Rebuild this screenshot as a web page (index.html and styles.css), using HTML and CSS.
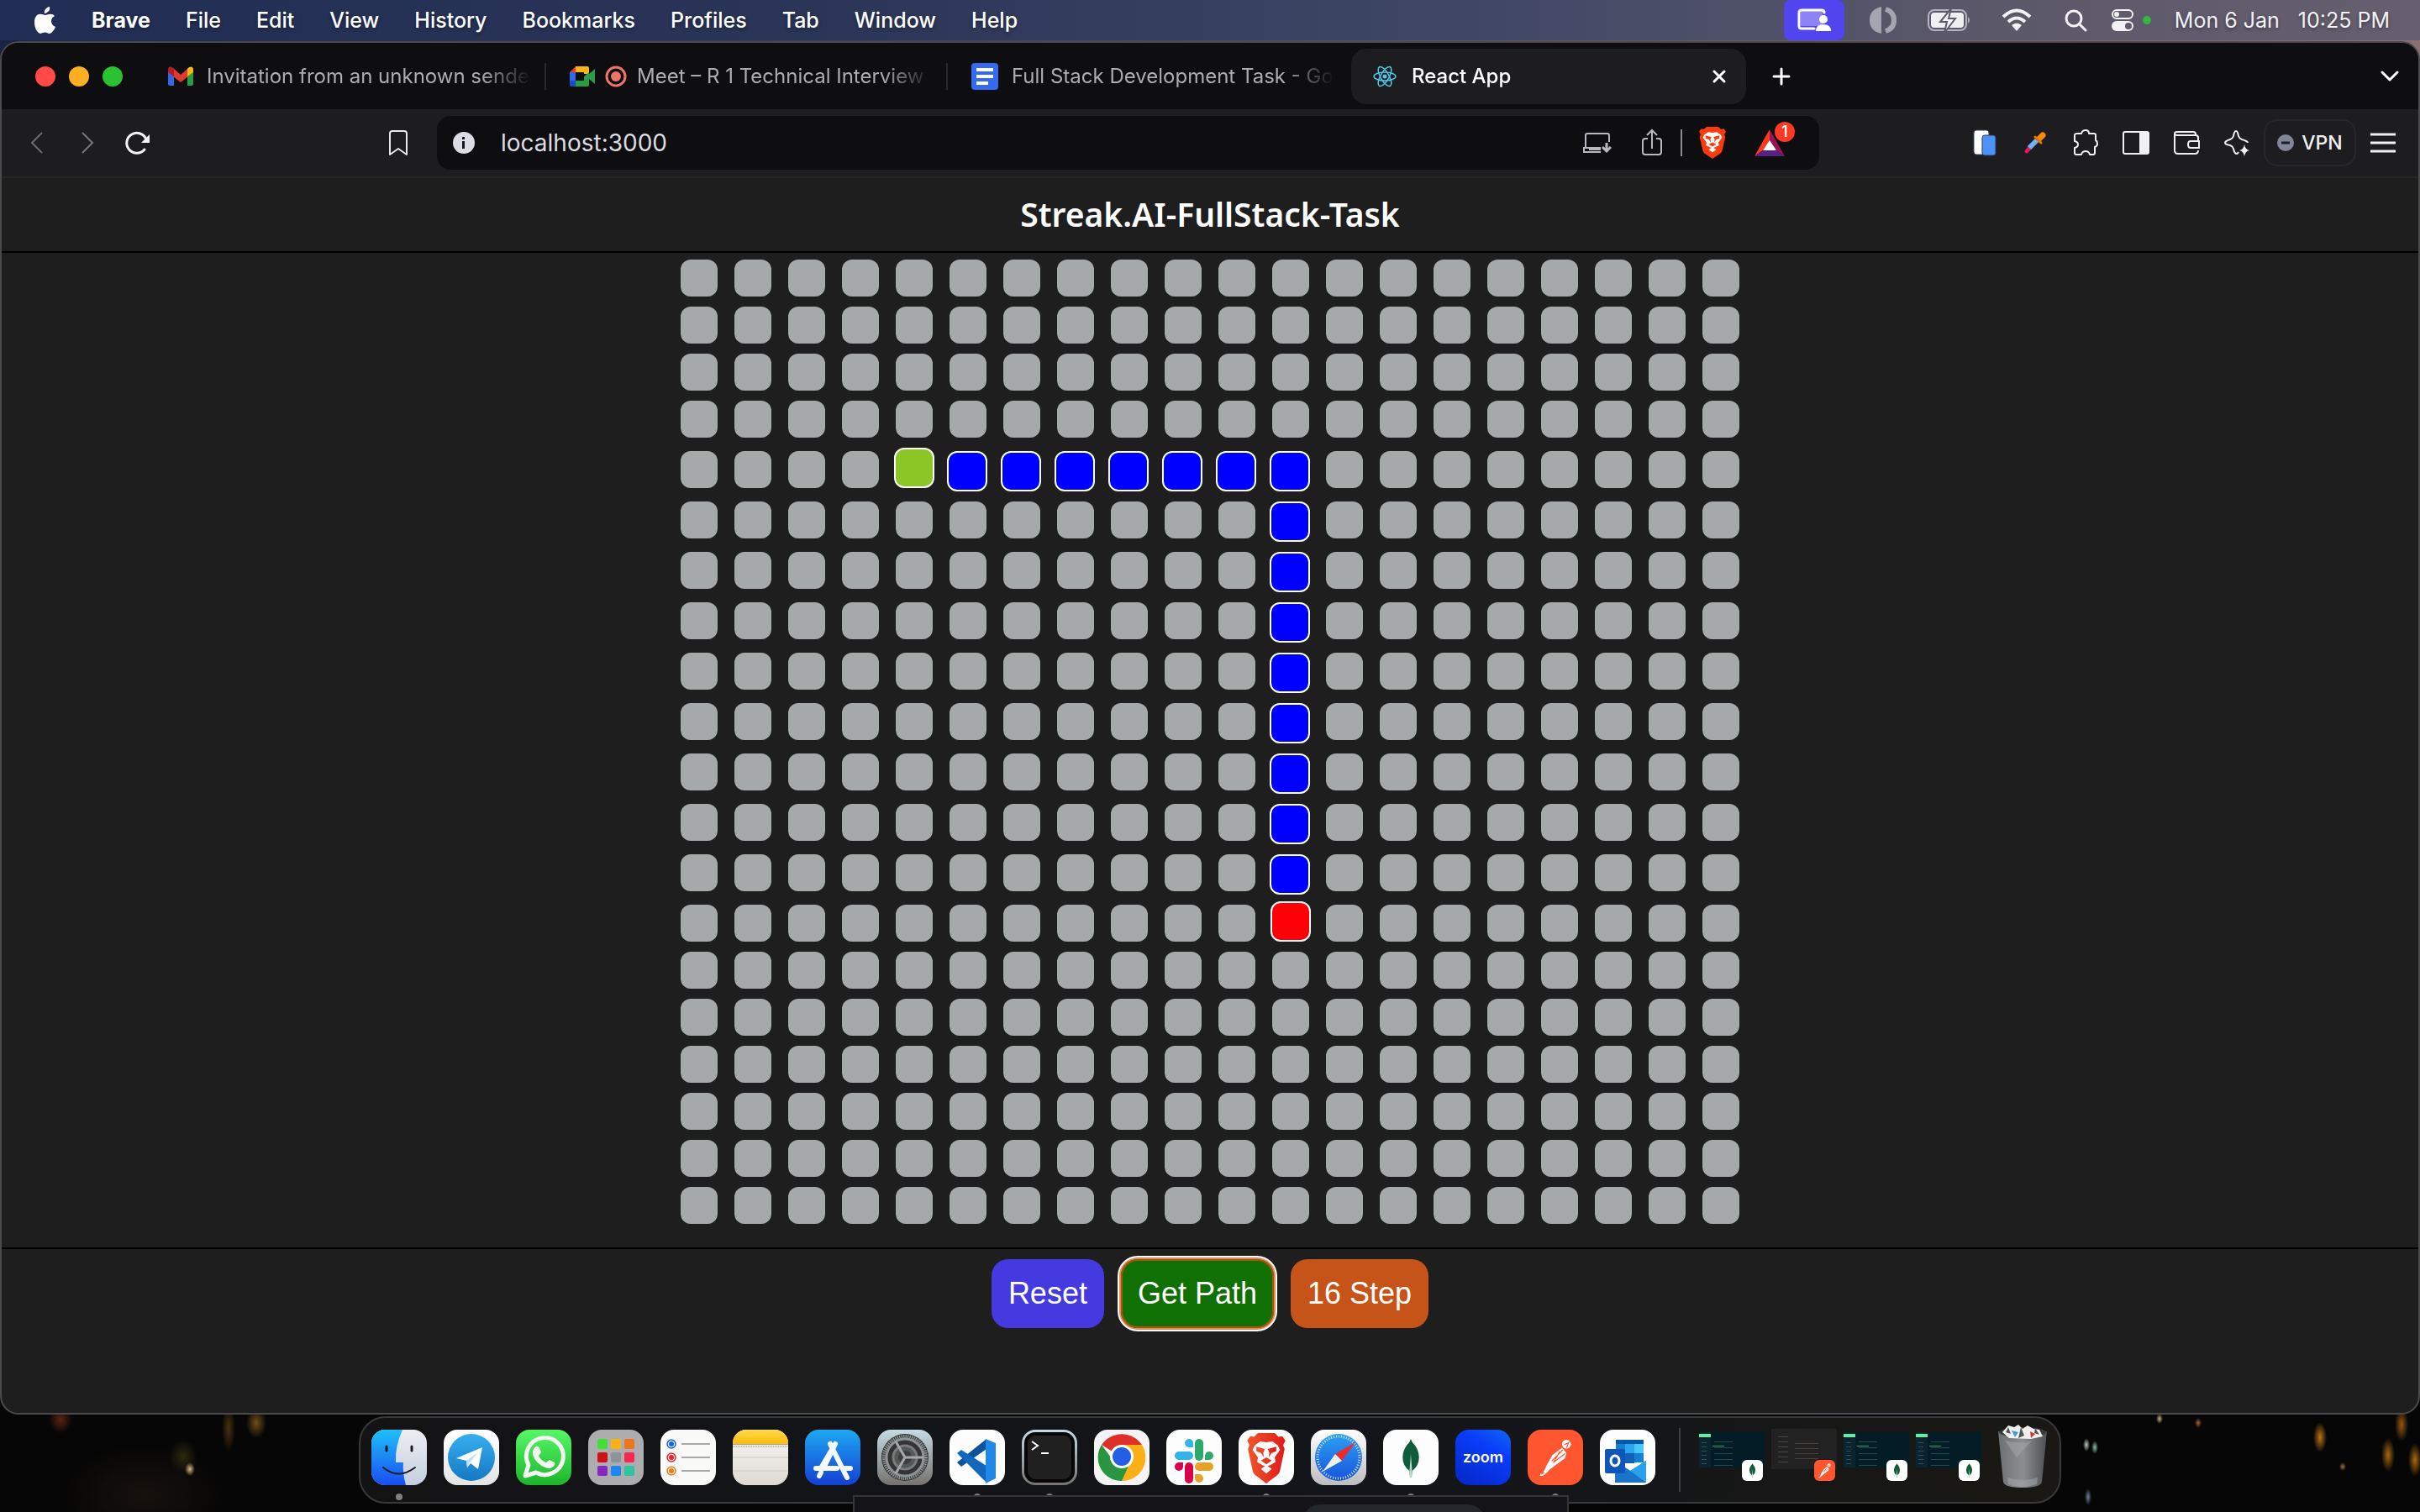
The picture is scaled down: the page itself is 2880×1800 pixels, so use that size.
FILE: index.html
```html
<!DOCTYPE html>
<html lang="en">
<head>
<meta charset="utf-8">
<meta name="viewport" content="width=device-width, initial-scale=1">
<title>React App</title>
<link rel="stylesheet" href="styles.css">
</head>
<body>
<svg class="defs" aria-hidden="true">
  <defs>
    <linearGradient id="gBlue" x1="0" y1="0" x2="0" y2="1"><stop offset="0" stop-color="#1ec0fb"/><stop offset="1" stop-color="#1a4df0"/></linearGradient>
    <linearGradient id="gFace" x1="0" y1="0" x2="0" y2="1"><stop offset="0" stop-color="#eeeef2"/><stop offset="1" stop-color="#c3cfe0"/></linearGradient>
    <linearGradient id="gWhite" x1="0" y1="0" x2="0" y2="1"><stop offset="0" stop-color="#fff"/><stop offset="1" stop-color="#e4e4e4"/></linearGradient>
    <linearGradient id="gTele" x1="0" y1="0" x2="0" y2="1"><stop offset="0" stop-color="#37aef0"/><stop offset="1" stop-color="#1479c4"/></linearGradient>
    <linearGradient id="gWa" x1="0" y1="0" x2="0" y2="1"><stop offset="0" stop-color="#56f866"/><stop offset="1" stop-color="#1cb52a"/></linearGradient>
    <linearGradient id="gStore" x1="0" y1="0" x2="0" y2="1"><stop offset="0" stop-color="#1ea8f3"/><stop offset="1" stop-color="#1440d2"/></linearGradient>
    <linearGradient id="gSet" x1="0" y1="0" x2="0" y2="1"><stop offset="0" stop-color="#c5dbe4"/><stop offset="1" stop-color="#75726e"/></linearGradient>
    <linearGradient id="gNote" x1="0" y1="0" x2="0" y2="1"><stop offset="0" stop-color="#f8f7f5"/><stop offset="1" stop-color="#dedad3"/></linearGradient>
    <linearGradient id="gYel" x1="0" y1="0" x2="0" y2="1"><stop offset="0" stop-color="#ffdb4d"/><stop offset="1" stop-color="#fdba0a"/></linearGradient>
    <linearGradient id="gLion" x1="0" y1="0" x2="1" y2="0"><stop offset="0" stop-color="#f0552a"/><stop offset="1" stop-color="#dd1b1b"/></linearGradient>
    <linearGradient id="gSaf" x1="0" y1="0" x2="0" y2="1"><stop offset="0" stop-color="#2da0f0"/><stop offset="1" stop-color="#1754dd"/></linearGradient>
    <linearGradient id="gSafBg" x1="0" y1="0" x2="0" y2="1"><stop offset="0" stop-color="#fff"/><stop offset="1" stop-color="#bdbdbd"/></linearGradient>
    <linearGradient id="gTrash" x1="0" y1="0" x2="1" y2="0"><stop offset="0" stop-color="#6c7073"/><stop offset=".5" stop-color="#8b8f92"/><stop offset="1" stop-color="#4c5053"/></linearGradient>
    <symbol id="lion" viewBox="0 0 50 66">
      <path d="M14 0h22l5 5 5-1 4 6-3 6 2 5-6 28q-1 5-6 8L25 66 13 57q-5-3-6-8L1 21l2-5-3-6 4-6 5 1z"/>
      <path fill="#fff" d="M17 11l8 1 8-1 7 5 3 6-7 10 1 6-7 4-5 2-5-2-7-4 1-6-7-10 3-6z"/>
      <path d="M12 18l11 3-2 5 1 6-4-6-6-2zM38 18l-11 3 2 5-1 6 4-6 6-2zM18 36l7-4 7 4-7 5z"/>
      <path fill="#fff" d="M18 47l7-5 7 5-7 6z"/>
    </symbol>
    <symbol id="leaf" viewBox="0 0 22 52">
      <path fill="#115b3d" d="M11 0q1 4 5 8 6 8 6 17 0 11-9 18l-1 9h-2l-1-9Q0 36 0 25 0 16 6 8q4-4 5-8z"/>
      <path fill="#b9d8c6" d="M11 20l2 26-1 6h-2l-1-6z"/>
    </symbol>
    <symbol id="courier" viewBox="0 0 44 50">
      <circle cx="37" cy="7" r="6" fill="#fff"/>
      <path fill="#fff" d="M31 12l6 7-2 7-20 15-5 5-5 4H1l1-3 3 0 5-11 8-14z"/>
      <path stroke="#ff5630" stroke-width="1.4" fill="none" d="M32 15L17 30M35 20L19 32M28 17l-8 14M3 47l4-1M34 8l6-3-3 7"/>
    </symbol>
  </defs>
</svg>

<header class="menubar">
  <nav class="menubar__left" aria-label="Application menu">
    <svg class="apple" viewBox="0 0 26 32" aria-hidden="true"><path fill="#fff" d="M18 0q1 4-2 6-2 2-4 2-1-3 2-6 2-2 4-2zM24 11q-4 2-4 6 0 5 5 7-1 3-3 5-2 3-4 3-2 0-3-1-2-1-5 0l-3 1q-2 0-4-3Q0 25 0 18q0-5 3-8 3-2 6-1l4 1 4-1q5-1 7 2z"/></svg>
    <a class="menubar__item menubar__item--app" href="#">Brave</a>
    <a class="menubar__item" href="#">File</a>
    <a class="menubar__item" href="#">Edit</a>
    <a class="menubar__item" href="#">View</a>
    <a class="menubar__item" href="#">History</a>
    <a class="menubar__item" href="#">Bookmarks</a>
    <a class="menubar__item" href="#">Profiles</a>
    <a class="menubar__item" href="#">Tab</a>
    <a class="menubar__item" href="#">Window</a>
    <a class="menubar__item" href="#">Help</a>
  </nav>
  <div class="menubar__right">
    <span class="share-pill"><svg width="40" height="30" viewBox="0 0 40 30"><path fill="#8c84f4" d="M4 4h26v18H4z"/><path fill="none" stroke="#fff" stroke-width="3" stroke-linecap="round" d="M20 25H5q-3 0-3-3V6q0-3 3-3h24q3 0 3 3"/><circle cx="31" cy="14" r="5" fill="#fff"/><path fill="#fff" d="M22 28q0-8 9-8t9 8z"/></svg></span>
    <svg class="status status--halves" width="34" height="34" viewBox="0 0 34 34"><path fill="#a5a5b2" d="M15 1v32Q1 30 1 17T15 1z"/><path fill="none" stroke="#a5a5b2" stroke-width="6" d="M20 4q10 3 10 13T20 30"/></svg>
    <svg class="status status--battery" width="52" height="30" viewBox="0 0 52 30"><rect x="1" y="3" width="45" height="24" rx="7" fill="none" stroke="#b5b3bf" stroke-width="2"/><rect x="4" y="6" width="39" height="18" rx="4" fill="#f0f0f2"/><path fill="#b5b3bf" d="M48 11q4 4 0 8z"/><path fill="#f4f4f6" stroke="#5d5a6c" stroke-width="2" d="M28 1L15 17h8l-3 13 13-17h-8z"/></svg>
    <svg class="status status--wifi" width="36" height="28" viewBox="0 0 36 28"><g fill="none" stroke="#f2f2f4" stroke-width="4"><path d="M2 10q16-15 32 0"/><path d="M8 16q10-9 20 0"/></g><path fill="#f2f2f4" d="M12 20q6-5 12 0l-6 7z"/></svg>
    <svg class="status status--search" width="28" height="28" viewBox="0 0 28 28" fill="none" stroke="#f2f2f4" stroke-width="3" stroke-linecap="round"><circle cx="12" cy="12" r="9"/><path d="M19 19l7 7"/></svg>
    <span class="control"><svg width="28" height="28" viewBox="0 0 28 28"><rect x="2" y="2" width="24" height="10" rx="5" fill="none" stroke="#f2f2f4" stroke-width="2"/><circle cx="7" cy="7" r="3" fill="#f2f2f4"/><rect x="1" y="15" width="26" height="12" rx="6" fill="#f2f2f4"/><circle cx="21" cy="21" r="4" fill="#5f5b6e"/></svg><i class="control__dot"></i></span>
    <time class="clock"><span>Mon 6 Jan</span><span>10:25 PM</span></time>
  </div>
</header>

<div class="window">
  <div class="tabstrip">
    <div class="lights"><i class="light light--close"></i><i class="light light--min"></i><i class="light light--max"></i></div>
    <div class="tab">
      <svg width="30" height="24" viewBox="0 0 30 24"><path fill="#3367e8" d="M0 6l7 5v12H2q-2 0-2-2z"/><path fill="#2a9c46" d="M30 6l-7 5v12h5q2 0 2-2z"/><path fill="#e03a30" d="M6 2l9 8 9-8v10l-9 7-9-7z"/><path fill="#b81a20" d="M0 4q0-5 5-3l2 2v9L0 7z"/><path fill="#fbb814" d="M30 4q0-5-5-3l-2 2v9l7-5z"/></svg>
      <span class="tab__title">Invitation from an unknown sende</span>
    </div>
    <div class="tab tab--call">
      <svg width="30" height="24" viewBox="0 0 30 24"><path fill="#e8392c" d="M0 7l7-7v7z"/><path fill="#fbb814" d="M7 0h14q2 0 2 2v7h-6V7H7z"/><path fill="#2f6bea" d="M0 7h7v10H0z"/><path fill="#1a4dc4" d="M0 17h7v7H2q-2 0-2-2z"/><path fill="#2a9c46" d="M7 17h10v-5l6-5v15q0 2-2 2H7zM23 9l7-6v18l-7-6z"/></svg>
      <svg width="26" height="26" viewBox="0 0 26 26"><circle cx="13" cy="13" r="11" fill="none" stroke="#ee7468" stroke-width="3"/><circle cx="13" cy="13" r="6" fill="#ee7468"/></svg>
      <span class="tab__title">Meet – R 1 Technical Interview</span>
    </div>
    <div class="tab tab--last">
      <svg width="32" height="32" viewBox="0 0 32 32"><rect width="32" height="32" rx="4" fill="#346af0"/><path fill="#fff" d="M6 6h20v4H6zM6 14h20v4H6zM6 22h14v4H6z"/></svg>
      <span class="tab__title">Full Stack Development Task - Go</span>
    </div>
    <div class="tab tab--active">
      <svg width="28" height="26" viewBox="-14 -13 28 26" fill="none" stroke="#4fc8ea" stroke-width="1.5"><circle r="2.5" fill="#4fc8ea" stroke="none"/><ellipse rx="13" ry="5"/><ellipse rx="13" ry="5" transform="rotate(60)"/><ellipse rx="13" ry="5" transform="rotate(120)"/></svg>
      <span class="tab__title">React App</span>
      <button class="icon-btn icon-btn--small" aria-label="Close tab"><svg width="16" height="16" viewBox="0 0 16 16"><path stroke="#fff" stroke-width="3" stroke-linecap="round" d="M2 2l12 12M14 2L2 14"/></svg></button>
    </div>
    <button class="icon-btn icon-btn--new" aria-label="New tab"><svg width="22" height="22" viewBox="0 0 22 22"><path stroke="#fff" stroke-width="3" stroke-linecap="round" d="M11 2v18M2 11h18"/></svg></button>
    <button class="icon-btn icon-btn--search" aria-label="Search tabs"><svg width="22" height="14" viewBox="0 0 22 14"><path fill="none" stroke="#fff" stroke-width="3" stroke-linecap="round" stroke-linejoin="round" d="M2 2l9 9 9-9"/></svg></button>
  </div>

  <div class="toolbar">
    <div class="toolbar__nav">
      <button class="icon-btn" aria-label="Back"><svg width="18" height="28" viewBox="0 0 18 28"><path fill="none" stroke="#6c6c70" stroke-width="2" d="M15 2L3 14l12 12"/></svg></button>
      <button class="icon-btn" aria-label="Forward"><svg width="18" height="28" viewBox="0 0 18 28"><path fill="none" stroke="#77777b" stroke-width="2" d="M3 2l12 12L3 26"/></svg></button>
      <button class="icon-btn" aria-label="Reload"><svg width="32" height="30" viewBox="0 0 32 30"><path fill="none" stroke="#f4f4f4" stroke-width="3" stroke-linecap="round" d="M24 23A12 12 0 1 1 26 11"/><path fill="#f4f4f4" d="M30 5v10H20z"/></svg></button>
      <button class="icon-btn toolbar__bookmark" aria-label="Bookmark"><svg width="24" height="30" viewBox="0 0 24 30"><path fill="none" stroke="#e8e8ea" stroke-width="2" stroke-linejoin="round" d="M2 4q0-3 3-3h14q3 0 3 3v25l-10-7-10 7z"/></svg></button>
    </div>
    <div class="urlbar">
      <svg width="28" height="28" viewBox="0 0 28 28"><circle cx="14" cy="14" r="13" fill="#dcdce4"/><path fill="#15151a" d="M12 12h3v9h-3zM12 7h3v3h-3z"/></svg>
      <input class="urlbar__input" type="text" value="localhost:3000" aria-label="Address">
      <svg width="34" height="26" viewBox="0 0 34 26" fill="none" stroke="#b8b8c0" stroke-width="2"><path d="M31 12V4q0-2-2-2H5Q3 2 3 4v15M21 19H1v5h20M8 19v2h13"/><path stroke-width="3" d="M28 13v9M23 18l5 5 5-5"/></svg>
      <div class="urlbar__group">
        <svg width="28" height="34" viewBox="0 0 28 34" fill="none" stroke="#b8b8c0" stroke-width="2"><path d="M9 12H6q-3 0-3 3v13q0 3 3 3h16q3 0 3-3V15q0-3-3-3h-3M14 24V3M8 8l6-6 6 6"/></svg>
        <i class="urlbar__rule"></i>
        <svg width="32" height="38" viewBox="0 0 50 66" preserveAspectRatio="none" fill="#fa3c0c"><use href="#lion" width="50" height="66"/></svg>
      </div>
      <span class="rewards"><svg width="36" height="32" viewBox="0 0 36 32"><path fill="#ff3a1a" d="M18 0L0 32l10-7 8-12z"/><path fill="#9a1257" d="M18 0l18 32-10-7-8-12z"/><path fill="#572182" d="M0 32l10-7h16l10 7z"/><path fill="#fff" d="M18 13l8 12H10z"/></svg><b class="rewards__badge">1</b></span>
    </div>
    <div class="toolbar__actions">
      <div class="toolbar__icons">
        <button class="icon-btn" aria-label="Copy pages"><svg width="28" height="32" viewBox="0 0 28 32"><rect x="1" y="1" width="18" height="29" rx="3" fill="#fff" stroke="#3b4663" stroke-width="1"/><rect x="11" y="7" width="16" height="24" rx="3" fill="#4d92f8" stroke="#2c3a5c" stroke-width="1"/></svg></button>
        <button class="icon-btn" aria-label="Color picker"><svg width="28" height="28" viewBox="0 0 28 28"><path stroke="#e6125c" stroke-width="5" stroke-linecap="round" d="M4 24l5-6"/><path stroke="#6cb6f5" stroke-width="6" d="M7 20l9-9"/><path stroke="#f78a0a" stroke-width="7" stroke-linecap="round" d="M19 9l4-4"/><path stroke="#f0700a" stroke-width="3" stroke-linecap="round" d="M14 7l7 7"/></svg></button>
        <button class="icon-btn" aria-label="Extensions"><svg width="32" height="32" viewBox="0 0 32 32"><path fill="none" stroke="#f0f0f2" stroke-width="2" stroke-linejoin="round" d="M6 5h5q1-4 5-4t4 4h6q2 0 2 2v6q2 1 2 4t-3 4v7q0 2-2 2h-4q-1-4-5-4t-5 4H5q-2 0-2-2v-6q4-1 4-4t-4-4V7q0-2 3-2z"/></svg></button>
        <button class="icon-btn" aria-label="Sidebar"><svg width="32" height="28" viewBox="0 0 32 28"><rect x="1" y="1" width="30" height="26" rx="2" fill="none" stroke="#f0f0f2" stroke-width="2"/><path fill="#f0f0f2" d="M20 1h11v26H20z"/></svg></button>
        <button class="icon-btn" aria-label="Wallet"><svg width="32" height="28" viewBox="0 0 32 28" fill="none" stroke="#f0f0f2" stroke-width="2"><path d="M30 13V8q0-3-3-3H5Q2 5 2 3t3-2h19q3 0 3 3M2 3v20q0 4 4 4h20q4 0 4-4M31 12H21q-3 0-3 4t3 4h10z"/></svg></button>
        <button class="icon-btn" aria-label="Leo AI"><svg width="32" height="32" viewBox="0 0 32 32"><path fill="none" stroke="#f0f0f2" stroke-width="2" stroke-linejoin="round" d="M15 2q2 0 3 6 1 3 4 4 7 2 7 4M15 2q-2 0-3 6-1 3-4 4-6 2-6 4t6 3q3 1 4 4 1 6 4 6 1 0 2-2"/><path fill="#f0f0f2" d="M25 18q1 6 6 7-5 1-6 7-1-6-6-7 5-1 6-7z"/></svg></button>
      </div>
      <button class="vpn"><svg width="20" height="20" viewBox="0 0 20 20"><circle cx="10" cy="10" r="10" fill="#82839c"/><path stroke="#1d1d20" stroke-width="3" d="M5 10h10"/></svg>VPN</button>
      <button class="icon-btn" aria-label="Menu"><svg width="30" height="24" viewBox="0 0 30 24"><path stroke="#f0f0f2" stroke-width="3" d="M0 2h30M0 12h30M0 22h30"/></svg></button>
    </div>
  </div>

  <main class="app">
    <h1 class="app__title">Streak.AI-FullStack-Task</h1>
    <div class="board" id="board"></div>
    <div class="controls">
      <button class="btn btn--reset">Reset</button>
      <button class="btn btn--path">Get Path</button>
      <button class="btn btn--steps">16 Step</button>
    </div>
  </main>
</div>

<footer class="dock-area">
  <div class="dock">
    <ul class="dock__apps">
      <li class="dock__app dock__app--running"><svg viewBox="0 0 66 66"><path fill="url(#gFace)" d="M0 0h66v66H0z"/><path fill="url(#gBlue)" d="M0 0h37q-9 20-8 39h9q-1 13 3 27H0z"/><path fill="none" stroke="#1c1c22" stroke-width="2" stroke-linecap="round" d="M14 45q18 15 38 0"/><path stroke="#1c1c22" stroke-width="3" stroke-linecap="round" d="M18 20v5M48 20v5"/></svg></li>
      <li class="dock__app"><svg viewBox="0 0 66 66"><path fill="url(#gWhite)" d="M0 0h66v66H0z"/><circle cx="33" cy="33" r="28" fill="url(#gTele)"/><path fill="#fff" d="M15 34l31-13-5 26-9-7-4 5-1-8z"/><path fill="#bcdcf2" d="M27 37l14-10-10 12-3 6z"/></svg></li>
      <li class="dock__app"><svg viewBox="0 0 66 66"><path fill="url(#gWa)" d="M0 0h66v66H0z"/><path fill="none" stroke="#f4f4f4" stroke-width="5" stroke-linejoin="round" d="M11 55l4-13A22 22 0 1 1 24 51z"/><path fill="#f4f4f4" d="M24 20q3-1 4 2l2 5-3 4q3 6 9 8l4-3 6 3q1 1 0 3-4 6-11 3-11-4-15-15-1-7 4-10z"/></svg></li>
      <li class="dock__app"><svg viewBox="0 0 66 66"><path fill="#adadb0" d="M0 0h66v66H0z"/><g><rect x="11" y="11" width="12" height="12" rx="2" fill="#3fe03a"/><rect x="27" y="11" width="12" height="12" rx="2" fill="#fbb016"/><rect x="43" y="11" width="12" height="12" rx="2" fill="#f0741c"/><rect x="11" y="27" width="12" height="12" rx="2" fill="#cf1018"/><rect x="27" y="27" width="12" height="12" rx="2" fill="#8b9498"/><rect x="43" y="27" width="12" height="12" rx="2" fill="#fa2850"/><rect x="11" y="43" width="12" height="12" rx="2" fill="#8826c4"/><rect x="27" y="43" width="12" height="12" rx="2" fill="#1c86f6"/><rect x="43" y="43" width="12" height="12" rx="2" fill="#2fc4a0"/></g></svg></li>
      <li class="dock__app"><svg viewBox="0 0 66 66"><path fill="#f9f9f8" d="M0 0h66v66H0z"/><path stroke="#aaaaae" stroke-width="2" d="M25 17h34M25 33h34M25 49h34"/><g stroke-width="1.5" fill="none"><circle cx="13" cy="17" r="5" stroke="#1462e8"/><circle cx="13" cy="33" r="5" stroke="#e82430"/><circle cx="13" cy="49" r="5" stroke="#ec7c10"/></g><circle cx="13" cy="17" r="3" fill="#1462e8"/><circle cx="13" cy="33" r="3" fill="#e82430"/><circle cx="13" cy="49" r="3" fill="#ec7c10"/></svg></li>
      <li class="dock__app"><svg viewBox="0 0 66 66"><path fill="url(#gNote)" d="M0 0h66v66H0z"/><path fill="url(#gYel)" d="M0 0h66v17H0z"/><path stroke="#a9a49a" d="M0 17.500h66"/><path stroke="#bab6ae" stroke-width="2" stroke-dasharray="1 1" d="M0 20h66"/><path stroke="#cfcbc6" d="M0 33h66M0 49h66"/></svg></li>
      <li class="dock__app"><svg viewBox="0 0 66 66"><path fill="url(#gStore)" d="M0 0h66v66H0z"/><path stroke="#f4f8ff" stroke-width="6" stroke-linecap="round" d="M36 17L20 44M17 55l2-4M30 17l20 40M13 46h25M48 46h6M36 17L22 46"/></svg></li>
      <li class="dock__app"><svg viewBox="0 0 66 66"><path fill="url(#gSet)" d="M0 0h66v66H0z"/><circle cx="33" cy="33" r="28" fill="#333433"/><circle cx="33" cy="33" r="25" fill="none" stroke="#8d9496" stroke-width="4" stroke-dasharray="1.500 1"/><circle cx="33" cy="33" r="22" fill="none" stroke="#8d9496" stroke-width="3"/><circle cx="33" cy="33" r="14" fill="#555656" stroke="#777b7c" stroke-width="3"/><circle cx="33" cy="33" r="8" fill="#3c3d3d"/><path stroke="#a2a9ab" stroke-width="3" d="M33 33h22M33 33L22 14M33 33L22 52"/></svg></li>
      <li class="dock__app dock__app--running"><svg viewBox="0 0 66 66"><path fill="#fdfdfd" d="M0 0h66v66H0z"/><path fill="#0c539c" d="M9 39l5 5 30-21V11z"/><path fill="#1266bd" d="M9 28l5-4 30 19v20z"/><path fill="#2088e8" d="M43 11l12 5v42l-12 6z"/></svg></li>
      <li class="dock__app dock__app--running"><svg viewBox="0 0 66 66"><path fill="url(#gSet)" d="M0 0h66v66H0z"/><rect x="3" y="3" width="60" height="60" rx="13" fill="#060606"/><rect x="7" y="7" width="52" height="52" rx="9" fill="#202020"/><path fill="none" stroke="#fff" stroke-width="2" d="M12 14l7 5-7 5M23 28h9"/></svg></li>
      <li class="dock__app"><svg viewBox="0 0 66 66"><path fill="#f4f4f4" d="M0 0h66v66H0z"/><path fill="#de2f28" d="M9 18A29 29 0 0 1 57 18L33 33z"/><path fill="#fbb016" d="M33 18h24A28 28 0 0 1 33 61l8-23z"/><path fill="#2a9540" d="M9 18A28 28 0 0 0 33 61l9-20-9-8-10 4z"/><circle cx="33" cy="32" r="14" fill="#fff"/><circle cx="33" cy="32" r="11" fill="#225fe6"/></svg></li>
      <li class="dock__app"><svg viewBox="0 0 66 66"><path fill="#fdfdfd" d="M0 0h66v66H0z"/><g stroke-width="10" stroke-linecap="round"><path stroke="#31b5e9" d="M15 31h12"/><path stroke="#2aab6c" d="M39 16v16"/><path stroke="#d8044a" d="M27 44v15"/><path stroke="#e6a226" d="M39 44h12"/></g><path fill="#31b5e9" d="M32 21H27a5 5 0 1 1 5-5z"/><path fill="#2aab6c" d="M46 36v-5a5 5 0 1 1 5 5z"/><path fill="#d8044a" d="M20 39v5a5 5 0 1 1-5-5z"/><path fill="#e6a226" d="M34 53h5a5 5 0 1 1-5 5z"/></svg></li>
      <li class="dock__app dock__app--running"><svg viewBox="0 0 66 66"><path fill="#fdfdfd" d="M0 0h66v66H0z"/><use href="#lion" x="8" y="4" width="50" height="60" fill="url(#gLion)"/></svg></li>
      <li class="dock__app"><svg viewBox="0 0 66 66"><path fill="url(#gSafBg)" d="M0 0h66v66H0z"/><circle cx="33" cy="33" r="28" fill="url(#gSaf)"/><circle cx="33" cy="33" r="25" fill="none" stroke="#d8e8f8" stroke-width="3" stroke-dasharray="1 2"/><path fill="#ee2a2c" d="M53 15L29 29l8 8z"/><path fill="#f0f0f0" d="M14 50l15-21 8 8z"/></svg></li>
      <li class="dock__app dock__app--running"><svg viewBox="0 0 66 66"><path fill="#fdfdfd" d="M0 0h66v66H0z"/><use href="#leaf" x="22" y="11" width="22" height="46"/></svg></li>
      <li class="dock__app"><span class="zoom-tile">zoom</span></li>
      <li class="dock__app dock__app--running"><svg viewBox="0 0 66 66"><path fill="#ff5630" d="M0 0h66v66H0z"/><use href="#courier" x="11" y="11" width="44" height="44"/></svg></li>
      <li class="dock__app"><svg viewBox="0 0 66 66"><path fill="#fdfdfd" d="M0 0h66v66H0z"/><path fill="#0a58a8" d="M19 12h33v10H19z"/><path fill="#1380d8" d="M19 17h33v22H19z"/><path fill="#2aa6f0" d="M30 17h11v11H30z"/><path fill="#4cc8fc" d="M41 17h11v11H41z"/><path fill="#0f62b8" d="M30 28h11v12H30z"/><path fill="#2090e4" d="M18 37l18 12 19-12v26H18z"/><path fill="#1a74cc" d="M18 37l18 12h18v14H18z"/><path fill="#28a2ee" d="M36 49l19-12v26z"/><rect x="6" y="23" width="24" height="29" rx="2" fill="#0f56b8"/><ellipse cx="18" cy="37" rx="5" ry="6" fill="none" stroke="#fff" stroke-width="3"/></svg></li>
    </ul>
    <i class="dock__rule"></i>
    <div class="dock__minimized">
      <span class="mini"><svg class="mini__badge" viewBox="0 0 25 25"><path fill="#fff" d="M0 0h25v25H0z"/><use href="#leaf" x="8" y="4" width="9" height="17"/></svg></span>
      <span class="mini mini--dark"><svg class="mini__badge" viewBox="0 0 25 25"><path fill="#ff5630" d="M0 0h25v25H0z"/><use href="#courier" x="4" y="4" width="17" height="17"/></svg></span>
      <span class="mini"><svg class="mini__badge" viewBox="0 0 25 25"><path fill="#fff" d="M0 0h25v25H0z"/><use href="#leaf" x="8" y="4" width="9" height="17"/></svg></span>
      <span class="mini"><svg class="mini__badge" viewBox="0 0 25 25"><path fill="#fff" d="M0 0h25v25H0z"/><use href="#leaf" x="8" y="4" width="9" height="17"/></svg></span>
    </div>
    <svg class="trash" viewBox="0 0 58 76"><path fill="url(#gTrash)" d="M0 9q29 8 58 0l-6 60q-1 7-23 7T6 69z"/><ellipse cx="29" cy="10" rx="28" ry="6" fill="#383a3c"/><path fill="#f0f0f0" d="M5 10l7-8 7 2 5-3 5 5 6-4 7 4 7 1 4 8-14 3-26-1z"/><path fill="#3a9fd0" d="M16 8l8 2-4 6z"/><path fill="#c64030" d="M38 9l6 3-5 5z"/><path fill="#555" d="M27 4l4 10-7 3zM12 4l3 8-6-2zM44 5l5 8-6-2z"/><path fill="#a6aaac" opacity=".5" d="M8 20q20 5 32 0L22 40zM12 72q16 6 34 0l1-8q-18 6-36 0z"/></svg>
  </div>
  <div class="peek"><i class="peek__pill"></i></div>
</footer>
<script src="board.js"></script>
</body>
</html>
```
FILE: styles.css
```css
:root {
  --ui: Inter, "Noto Sans", sans-serif;
  --page: #1e1e1e;
  --bar: #1d1d1f;
  --deep: #0e0e10;
}

* { box-sizing: border-box; }

body {
  margin: 0;
  min-height: 100vh;
  display: flex;
  flex-direction: column;
  overflow: hidden;
  font-family: var(--ui);
  color: #fff;
  background:
    radial-gradient(ellipse 12px 18px at 305px calc(100% - 106px), #6f4f18, transparent),
    radial-gradient(ellipse 8px 28px at 272px calc(100% - 100px), #4b3010, transparent),
    radial-gradient(ellipse 14px 16px at 72px calc(100% - 110px), #5c260e, transparent),
    radial-gradient(ellipse 6px 8px at 226px calc(100% - 51px), #e0b880, transparent),
    radial-gradient(ellipse 16px 20px at 218px calc(100% - 66px), #2c2810, transparent),
    radial-gradient(ellipse 100px 60px at 170px calc(100% - 20px), #17110d, transparent),
    radial-gradient(ellipse 8px 18px at calc(100% - 119px) calc(100% - 89px), #bb7412, transparent),
    radial-gradient(ellipse 8px 20px at calc(100% - 38px) calc(100% - 68px), #a8670f, transparent),
    radial-gradient(ellipse 8px 20px at calc(100% - 22px) calc(100% - 104px), #9a560f, transparent),
    radial-gradient(ellipse 8px 20px at calc(100% - 6px) calc(100% - 62px), #a8670f, transparent),
    radial-gradient(ellipse 4px 8px at calc(100% - 397px) calc(100% - 80px), #b8d0c0, transparent),
    radial-gradient(ellipse 4px 8px at calc(100% - 387px) calc(100% - 77px), #8fc0a8, transparent),
    radial-gradient(ellipse 4px 6px at calc(100% - 310px) calc(100% - 111px), #c0b090, transparent),
    radial-gradient(ellipse 4px 6px at calc(100% - 264px) calc(100% - 106px), #b06030, transparent),
    radial-gradient(ellipse 4px 5px at calc(100% - 92px) calc(100% - 54px), #a07040, transparent),
    radial-gradient(ellipse 4px 10px at calc(100% - 395px) calc(100% - 18px), #6f7f90, transparent),
    linear-gradient(#0000 50%, #060606 50%),
    linear-gradient(90deg, #1a2346, #8a6f74);
  background-color: #060606;
}

button { font: inherit; color: inherit; border: 0; background: none; padding: 0; cursor: pointer; }
svg { display: block; flex: none; }
.defs { position: absolute; width: 0; height: 0; }

/* System menu bar */
.menubar {
  height: 48px;
  display: flex;
  justify-content: space-between;
  align-items: center;
  background: linear-gradient(90deg, #212d54, #2b3558 34%, #414867 62%, #595769 80%, #675f70);
  font-size: 25px;
  font-weight: 500;
  text-shadow: 0 2px 4px #0006;
}
.menubar__left { display: flex; align-items: center; gap: 42px; padding-left: 41px; }
.menubar__item { color: #fff; text-decoration: none; }
.menubar__item--app { font-weight: 700; }
.apple { width: 26px; height: 32px; }
.menubar__right { display: flex; align-items: center; height: 100%; padding-right: 36px; }
.share-pill {
  width: 72px; height: 48px; border-radius: 8px; background: #5145f0;
  display: grid; place-items: center;
}
.status--halves { margin-left: 29px; }
.status--battery { margin-left: 36px; }
.status--wifi { margin-left: 36px; }
.status--search { margin-left: 38px; }
.control { display: flex; align-items: center; gap: 10px; margin-left: 28px; }
.control__dot { width: 10px; height: 10px; border-radius: 50%; background: #30b842; }
.clock { display: flex; gap: 22px; margin-left: 28px; color: #f2f2f4; font-weight: 400; white-space: nowrap; }

/* Browser window */
.window {
  flex: 1;
  margin-top: 1px;
  display: flex;
  flex-direction: column;
  border: 2px solid #4b4b4d;
  border-radius: 22px;
  overflow: hidden;
  background: var(--page);
}
.tabstrip {
  height: 79px;
  display: flex;
  align-items: center;
  background: var(--deep);
  font-size: 24px;
}
.lights { flex: none; display: flex; gap: 16px; width: 170px; padding-left: 40px; }
.light { width: 24px; height: 24px; border-radius: 50%; }
.light--close { background: #ff4a47; }
.light--min { background: #fdaf24; }
.light--max { background: #2ac231; }
.tab {
  flex: 0 1 478px;
  min-width: 0;
  height: 32px;
  display: flex;
  align-items: center;
  gap: 16px;
  padding: 0 16px 0 28px;
  border-right: 2px solid #2a2a2d;
  color: #adadb0;
}
.tab__title {
  flex: 1;
  overflow: hidden;
  white-space: nowrap;
  mask-image: linear-gradient(90deg, #000 calc(100% - 60px), transparent);
}
.tab--call { gap: 12px; }
.tab--last { border-color: transparent; }
.tab--active {
  flex-basis: 470px;
  height: 66px;
  margin-left: 2px;
  gap: 18px;
  padding: 0 20px 0 26px;
  border: 0;
  border-radius: 18px;
  background: var(--bar);
  color: #fff;
  font-weight: 500;
}
.icon-btn { flex: none; width: 40px; height: 40px; display: grid; place-items: center; }
.icon-btn--small { width: 24px; }
.icon-btn--new { margin-left: 22px; }
.icon-btn--search { margin: 0 14px 0 auto; }

.toolbar {
  height: 82px;
  display: grid;
  grid-template-columns: 518px 1fr 713px;
  align-items: center;
  background: var(--bar);
  border-bottom: 2px solid #262629;
}
.toolbar__nav { display: flex; align-items: center; gap: 20px; padding: 0 26px 0 22px; }
.toolbar__bookmark { margin-left: auto; }
.urlbar {
  height: 64px;
  display: flex;
  align-items: center;
  gap: 34px;
  padding: 0 37px 0 18px;
  border-radius: 16px;
  background: var(--deep);
}
.urlbar__input {
  flex: 1;
  min-width: 0;
  margin-left: -4px;
  padding: 0;
  border: 0;
  outline: 0;
  background: none;
  color: #dcdce2;
  font: 28px var(--ui);
}
.urlbar__group { display: flex; align-items: center; gap: 20px; }
.urlbar__rule { width: 2px; height: 32px; background: #8a8a90; }
.rewards { position: relative; padding-right: 4px; }
.rewards__badge {
  position: absolute;
  right: -8px;
  top: -9px;
  width: 24px;
  height: 24px;
  border-radius: 12px;
  background: #fa3a22;
  font-size: 18px;
  font-weight: 500;
  line-height: 24px;
  text-align: center;
}
.toolbar__actions { display: flex; align-items: center; justify-content: flex-end; gap: 12px; padding-right: 22px; }
.toolbar__icons { display: flex; gap: 20px; }
.vpn {
  width: 110px;
  height: 56px;
  display: flex;
  align-items: center;
  justify-content: center;
  gap: 9px;
  border: 2px solid #27272a;
  border-radius: 16px;
  color: #f0f0f2;
  font-size: 23px;
  font-weight: 500;
}

/* Path-finding app */
.app { flex: 1; display: flex; flex-direction: column; }
.app__title {
  margin: 0;
  padding: 16px 0 17px;
  border-bottom: 2px solid #000;
  font: 600 39px/54px "Trebuchet MS", "Noto Sans", sans-serif;
  text-align: center;
}
.board {
  display: flex;
  flex-direction: column;
  align-items: center;
  gap: 12px;
  padding: 8px 0 28px;
  border-bottom: 2px solid #000;
}
.board__row {
  display: grid;
  grid-template-columns: repeat(20, 64px);
  justify-items: center;
  align-items: end;
}
.cell { width: 44px; height: 44px; border-radius: 12px; background: #a5a9a9; }
.cell--start, .cell--end, .cell--path { width: 48px; height: 48px; border: 2px solid #fff; }
.cell--start { background: #8bc726; }
.cell--end { background: #fd0008; }
.cell--path { margin: 4px 2px -4px 0; background: #0000fe; }
.board__row--route { height: 48px; }

.controls { display: flex; justify-content: center; gap: 20px; padding-top: 12px; }
.btn {
  padding: 20px;
  border-radius: 20px;
  font: 36px/42px "Liberation Sans", Arial, sans-serif;
}
.btn--reset { background: #443adf; }
.btn--path {
  background: #107004;
  box-shadow: inset 0 0 0 2px #9c5a0c, 0 0 0 2px #ee8552, 0 0 0 4px #fff;
}
.btn--steps { background: #c65318; }

/* Dock */
.dock-area { position: relative; display: flex; justify-content: center; padding: 2px 0 10px; }
.dock {
  display: flex;
  align-items: center;
  height: 104px;
  padding: 0 15px 0 13px;
  border: 2px solid #38393a;
  border-radius: 32px;
  background: linear-gradient(90deg, #131314, #13151a 60%, #191814);
}
.dock__apps { display: flex; gap: 20px; margin: 0; padding: 0; list-style: none; }
.dock__app { position: relative; width: 66px; height: 66px; margin-bottom: 6px; }
.dock__app > svg, .zoom-tile { width: 66px; height: 66px; border-radius: 16px; overflow: hidden; }
.dock__app--running::after {
  content: "";
  position: absolute;
  left: 29px;
  top: 76px;
  width: 8px;
  height: 8px;
  border-radius: 50%;
  background: #818184;
}
.zoom-tile {
  display: grid;
  place-items: center;
  background: linear-gradient(210deg, #1266f5, #0a3cfa 35%, #0427c4);
  font: 600 18px/20px var(--ui);
}
.dock__rule { width: 2px; height: 76px; margin: 0 22px 0 28px; background: #3f4042; }
.dock__minimized { display: flex; gap: 8px; }
.mini {
  position: relative;
  width: 78px;
  height: 42px;
  margin-bottom: 22px;
  background:
    linear-gradient(#5cf0a0, #5cf0a0) 0 2px / 14px 4px no-repeat,
    repeating-linear-gradient(#0000 0 2px, #2a5058 2px 3px, #0000 3px 5px) 3px 10px / 6px 30px no-repeat,
    repeating-linear-gradient(#0000 0 3px, #1f4a4c 3px 4px, #0000 4px 7px) 18px 8px / 22px 32px no-repeat,
    linear-gradient(#24a860, #24a860) 16px 16px / 14px 1px no-repeat,
    linear-gradient(90deg, #0c2430 14px, #041c26 14px);
}
.mini--dark {
  height: 48px;
  margin-top: -4px;
  background:
    repeating-linear-gradient(#0000 0 3px, #4a4038 3px 4px, #0000 4px 6px) 28px 14px / 28px 22px no-repeat,
    repeating-linear-gradient(#0000 0 3px, #484848 3px 4px, #0000 4px 6px) 8px 6px / 12px 38px no-repeat,
    #222;
}
.mini__badge { position: absolute; right: 2px; bottom: -16px; width: 25px; height: 25px; border-radius: 6px; overflow: hidden; }
.mini--dark .mini__badge { bottom: -14px; }
.trash { width: 58px; height: 76px; margin: 0 0 10px 20px; }
.peek {
  position: absolute;
  left: 50%;
  bottom: 0;
  width: 852px;
  height: 20px;
  margin-left: -425px;
  border: 2px solid #353538;
  border-bottom: 0;
  background: #131318;
  overflow: hidden;
}
.peek__pill { display: block; width: 216px; height: 40px; margin: 9px 0 0 534px; border-radius: 20px; background: #24272c; }
```
FILE: board.js
```js
const SIZE = 20;
const start = { row: 4, col: 4 };
const end = { row: 13, col: 11 };

function cellKind(row, col) {
  if (row === start.row && col === start.col) return "start";
  if (row === end.row && col === end.col) return "end";
  const across = row === start.row && col > start.col && col <= end.col;
  const down = col === end.col && row > start.row && row < end.row;
  return across || down ? "path" : "";
}

const board = document.getElementById("board");
for (let row = 0; row < SIZE; row++) {
  const line = document.createElement("div");
  line.className = "board__row";
  if (row >= start.row && row <= end.row) line.classList.add("board__row--route");
  for (let col = 0; col < SIZE; col++) {
    const cell = document.createElement("button");
    const kind = cellKind(row, col);
    cell.className = kind ? `cell cell--${kind}` : "cell";
    cell.setAttribute("aria-label", `Row ${row + 1}, column ${col + 1}`);
    line.append(cell);
  }
  board.append(line);
}
```
